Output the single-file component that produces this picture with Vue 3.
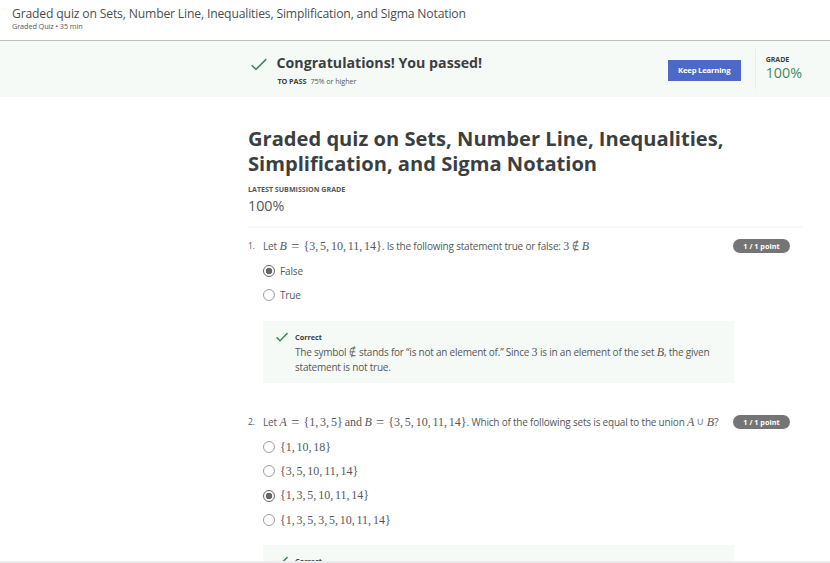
<script setup>
const questions = [
  {
    prompt: [
      { text: 'Let ' },
      { math: 'B', set: '{3, 5, 10, 11, 14}' },
      { text: '. Is the following statement true or false: ' },
      { text: '3', cls: 'math' },
      { rel: '∉', cls: 'notin' },
      { text: 'B', cls: 'var' },
    ],
    options: [{ label: 'False', checked: true }, { label: 'True' }],
    feedback: true,
  },
  {
    prompt: [
      { text: 'Let ' },
      { math: 'A', set: '{1, 3, 5}' },
      { text: ' and ', cls: 'and' },
      { math: 'B', set: '{3, 5, 10, 11, 14}' },
      { text: '. Which of the following sets is equal to the union ' },
      { text: 'A', cls: 'var' },
      { rel: '∪', cls: 'union' },
      { text: 'B', cls: 'var' },
      { text: '?' },
    ],
    options: [
      { set: '{1, 10, 18}' },
      { set: '{3, 5, 10, 11, 14}' },
      { set: '{1, 3, 5, 10, 11, 14}', checked: true },
      { set: '{1, 3, 5, 3, 5, 10, 11, 14}' },
    ],
  },
]
</script>

<template>
  <div class="page">
    <header class="top">
      <div class="top-title">Graded quiz on Sets, Number Line, Inequalities, Simplification, and Sigma Notation</div>
      <div class="top-sub">Graded Quiz • 35 min</div>
    </header>

    <section class="banner">
      <svg class="big-check" viewBox="0 0 16 13"><path d="M0.7 7.2 L5 11.4 L15.3 1.1" /></svg>
      <div class="result">
        <div class="congrats">Congratulations! You passed!</div>
        <div class="pass"><b>TO PASS</b><span>75% or higher</span></div>
      </div>
      <button class="keep">Keep Learning</button>
      <div class="grade">
        <div class="grade-label">GRADE</div>
        <div class="grade-value">100%</div>
      </div>
    </section>

    <main class="content">
      <h1>Graded quiz on Sets, Number Line, Inequalities,<br />Simplification, and Sigma Notation</h1>
      <div class="latest">LATEST SUBMISSION GRADE</div>
      <div class="score">100%</div>

      <article v-for="(q, i) in questions" :key="i" class="question">
        <div class="row">
          <span class="num">{{ i + 1 }}.</span>
          <div class="prompt">
            <template v-for="(s, j) in q.prompt" :key="j">
              <span v-if="s.math" class="eq"><span class="var">{{ s.math }}</span><span class="rel">=</span><span class="math">{{ s.set }}</span></span>
              <span v-else-if="s.rel" class="sym" :class="s.cls">{{ s.rel }}</span>
              <span v-else :class="s.cls">{{ s.text }}</span>
            </template>
          </div>
          <span class="pill">1 / 1 point</span>
        </div>
        <div class="options">
          <div v-for="(o, k) in q.options" :key="k" class="option">
            <span class="radio" :class="{ on: o.checked }"></span>
            <span v-if="o.set" class="math">{{ o.set }}</span>
            <span v-else class="word">{{ o.label }}</span>
          </div>
        </div>
        <div class="feedback">
          <svg class="check" viewBox="0 0 12 10"><path d="M0.6 5.4 L4 8.7 L11.5 1" /></svg>
          <div>
            <div class="correct">Correct</div>
            <p v-if="q.feedback">
              The symbol <span class="notin inline">∉</span> stands for “is not an element of.” Since <span class="math">3</span> is in an element of the set <span class="var">B</span>, the given<br />
              statement is not true.
            </p>
          </div>
        </div>
      </article>
    </main>
    <div class="edge"></div>
  </div>
</template>

<style>
body { margin: 0; background: #fff; overflow: hidden; }
</style>

<style scoped>
.page {
  height: 563px;
  overflow: hidden;
  display: flex;
  flex-direction: column;
  box-sizing: border-box;
  font-family: "Open Sans", sans-serif;
  color: #55585a;
  white-space: nowrap;
}
.top {
  flex: none;
  box-sizing: border-box;
  height: 41px;
  padding: 5px 12px 0;
  border-bottom: 1px solid #bdbdbd;
}
.top-title { font-size: 12.2px; line-height: 17px; letter-spacing: -0.175px; color: #4c4f50; }
.top-sub { margin-top: -1px; font-size: 7.3px; line-height: 10px; letter-spacing: -0.1px; }
.banner {
  flex: none;
  box-sizing: border-box;
  height: 56px;
  padding: 0 28px 0 251px;
  display: flex;
  align-items: flex-start;
  background: #f5faf7;
}
.big-check { width: 16px; height: 13px; margin-top: 17px; }
.big-check path, .check path { fill: none; stroke: #478a59; stroke-width: 1.6; }
.result { margin-left: 9.5px; width: 391.5px; }
.congrats { margin-top: 12px; font-size: 14.2px; line-height: 20px; font-weight: 700; color: #3c3f41; }
.pass { display: flex; gap: 4px; margin: 3px 0 0 1px; font-size: 7.3px; line-height: 10px; letter-spacing: -0.1px; }
.pass b { color: #3c3f41; }
.keep {
  width: 73px;
  height: 21px;
  margin: 19px 0 0;
  padding: 0;
  border: 0;
  background: #4d69c8;
  color: #fff;
  font: 700 7.7px/21px "Open Sans", sans-serif;
  letter-spacing: -0.2px;
}
.grade { margin: 8px 0 0 14px; height: 40px; border-left: 1px solid #e9eeeb; padding-left: 10px; }
.grade-label { margin-top: 6px; font-size: 7px; line-height: 9px; font-weight: 700; color: #3c3f41; }
.grade-value { font-size: 14.3px; line-height: 17px; color: #478a59; }
.content { flex: none; height: 464px; overflow: hidden; padding: 0 28px 0 248px; box-sizing: border-box; }
h1 { margin: 29px 0 0; font-size: 20.13px; line-height: 25px; font-weight: 700; color: #3c3f41; }
.latest { margin-top: 8px; font-size: 7.1px; line-height: 10px; font-weight: 700; }
.score { margin-top: 2px; height: 32px; font-size: 14.3px; line-height: 19px; border-bottom: 2px solid #f7f7f7; box-sizing: border-box; }
.question { height: 176px; padding-top: 9px; box-sizing: border-box; }
.question + .question { height: auto; }
.row { display: flex; height: 18px; align-items: center; }
.num { width: 15px; font-size: 8.5px; line-height: 16px; letter-spacing: -0.2px; }
.prompt { width: 470px; font-size: 10px; line-height: 18px; letter-spacing: -0.2px; display: flex; white-space: pre; }
.pill {
  width: 57px;
  height: 14px;
  border-radius: 7px;
  background: #757575;
  color: #fff;
  font-size: 7.3px;
  line-height: 14px;
  font-weight: 700;
  text-align: center;
}
.math, .var, .rel, .sym, .notin, .and { font-family: "Liberation Serif", serif; font-size: 12px; letter-spacing: 0; }
.math { word-spacing: -1.2px; }
.var { font-style: italic; }
.and { word-spacing: -1px; }
.eq { display: flex; padding-left: 0.4px; }
.rel { width: 16.6px; font-size: 14.5px; text-align: center; }
.notin { display: inline-block; width: 12.5px; text-align: center; transform: scaleX(0.68); }
.notin.inline { width: 9px; margin: 0 -0.6px; line-height: 12px; }
.union { width: 12.5px; text-align: center; font-family: "DejaVu Sans", sans-serif; font-size: 11px; color: #85888a; }
.options { margin: 4px 0 0 14.5px; }
.option { display: flex; align-items: center; height: 24.3px; gap: 5.5px; font-size: 10px; letter-spacing: -0.15px; }
.radio { width: 12px; height: 12px; border: 1px solid #9e9e9e; border-radius: 50%; box-sizing: border-box; }
.radio.on { border-color: #666; background: radial-gradient(circle, #666 0 3px, transparent 3.6px); }
.feedback {
  box-sizing: border-box;
  width: 470.5px;
  height: 62px;
  margin: 13px 0 0 15px;
  padding: 11px 0 0 13px;
  display: flex;
  gap: 7px;
  background: #f5faf7;
}
.check { width: 12px; height: 10px; }
.correct { font-size: 7.3px; line-height: 10px; font-weight: 700; color: #3c3f41; }
.feedback p { margin: 3px 0 0; font-size: 10px; line-height: 15px; letter-spacing: -0.22px; }
.feedback p span { line-height: 12px; }
.edge { flex: none; height: 2px; background: #ececec; }
</style>
